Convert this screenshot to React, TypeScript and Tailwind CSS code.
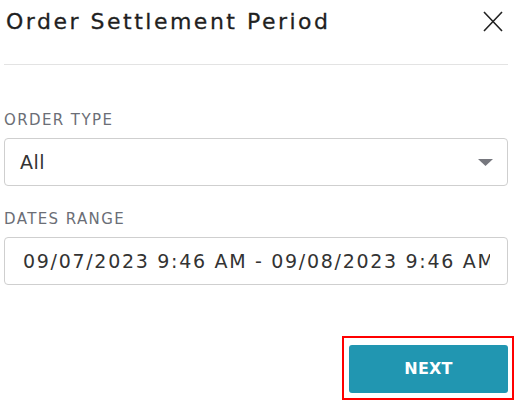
export default function App() {
  return (
    <div
      className="w-[518px] h-[405px] bg-white pl-[4px] pr-[10px] text-[#222]"
      style={{ fontFamily: "'DejaVu Sans', Verdana, sans-serif" }}
    >
      {/* header */}
      <div className="flex items-center justify-between h-[43px] pl-[2px]">
        <h2 className="text-[22px] text-[#1f1f1f] tracking-[2.5px] [-webkit-text-stroke:0.3px_#1f1f1f]">
          Order Settlement Period
        </h2>
        <button aria-label="Close" className="mr-[5px] text-[#222]">
          <svg width="20" height="21" viewBox="0 0 20 21" fill="none" stroke="currentColor" strokeWidth="1.6">
            <path d="M1 1 L19 20 M19 1 L1 20" />
          </svg>
        </button>
      </div>
      <div className="mt-[21px] border-t border-[#e3e3e3]" />

      {/* order type */}
      <div className="mt-[45px] text-[15px] leading-[20px] text-[#6b6e76] uppercase tracking-[1.4px]">Order Type</div>
      <div className="mt-[8px] h-[48px] flex items-center justify-between border border-[#cfcfcf] rounded-[4px] pl-[15px] pr-[14px]">
        <span className="text-[19px] text-[#333] tracking-[0.5px]">All</span>
        <svg width="15" height="7" viewBox="0 0 15 7">
          <path d="M0 0 H15 L7.5 7 Z" fill="#76777e" />
        </svg>
      </div>

      {/* dates range */}
      <div className="mt-[23px] text-[15px] leading-[20px] text-[#6b6e76] uppercase tracking-[1.4px]">Dates Range</div>
      <div className="mt-[8px] h-[48px] flex items-center border border-[#cfcfcf] rounded-[4px] pl-[18px] pr-[17px] overflow-hidden">
        <span className="text-[19px] text-[#333] whitespace-nowrap overflow-hidden tracking-[1.7px]">
          09/07/2023 9:46 AM - 09/08/2023 9:46 AM
        </span>
      </div>

      {/* footer */}
      <div className="mt-[51px] flex justify-end">
        <div className="-mr-[6px] border-2 border-[#ff0000] pl-[5px] pr-[4px] pt-[7px] pb-[5px]">
          <button className="w-[159px] h-[48px] rounded-[3px] bg-[#2196b1] text-white text-[16px] font-bold tracking-[0.2px]">
            NEXT
          </button>
        </div>
      </div>
    </div>
  );
}
